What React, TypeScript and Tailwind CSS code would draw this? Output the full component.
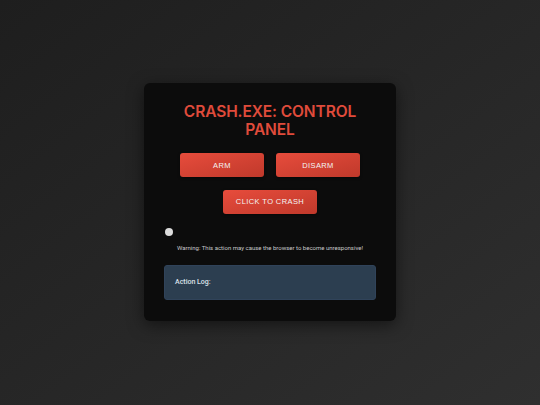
export default function App() {
  return (
    <div className="flex h-[405px] w-[540px] items-center justify-center bg-gradient-to-br from-[#1e1e1e] to-[#2f2f2f] font-['Roboto',sans-serif]">
      <div className="-mt-[1px] flex w-[252px] flex-col items-center rounded-md bg-[#0c0c0c] px-5 pt-5 pb-[21px] shadow-[0_4px_16px_rgba(0,0,0,0.5)]">
        <h1 className="text-center font-['Inter',sans-serif] text-[15.5px] leading-[18px] font-semibold tracking-[-0.1px] text-[#e04b3b]">
          CRASH.EXE: CONTROL PANEL
        </h1>

        <div className="mt-[14px] flex gap-3">
          <ActionButton label="ARM" className="w-[84px]" />
          <ActionButton label="DISARM" className="w-[84px]" />
        </div>
        <div className="mt-[10px]">
          <ActionButton label="CLICK TO CRASH" className="w-[94px]" />
        </div>

        <div className="mt-[14px] flex w-full">
          <span className="ml-px size-2 rounded-full bg-[#dcdcdc]" />
        </div>

        <p className="mt-2 text-center text-[6px] leading-[8px] text-[#c8c8c8]">
          Warning: This action may cause the browser to become unresponsive!
        </p>

        <div className="mt-[13px] flex h-[35px] w-full items-center rounded-[3px] border border-[#30435a] bg-[#2c3e50] px-[10px]">
          <span className="text-[7px] font-medium text-[#dde3ea]">Action Log:</span>
        </div>
      </div>
    </div>
  );
}

function ActionButton({ label, className }: { label: string; className?: string }) {
  return (
    <button
      className={`h-6 rounded-[3px] bg-gradient-to-br from-[#e74c3c] to-[#c0392b] font-['Liberation_Sans',sans-serif] text-[7.5px] tracking-[0.4px] text-[#f3f3f3] shadow-[0_1px_3px_rgba(0,0,0,0.4)] ${className ?? ""}`}
    >
      {label}
    </button>
  );
}
